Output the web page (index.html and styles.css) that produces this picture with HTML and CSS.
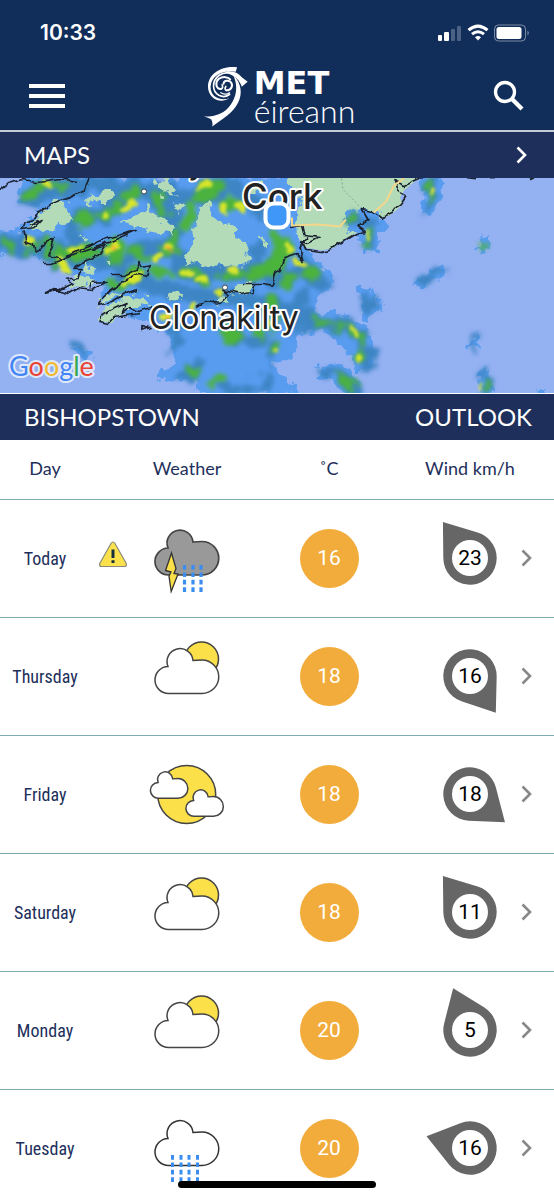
FILE: index.html
```html
<!DOCTYPE html>
<html lang="en">
<head>
  <meta charset="UTF-8" />
  <meta name="viewport" content="width=device-width, initial-scale=1.0"/>
  <title>MET éireann</title>
  <link rel="stylesheet" href="styles.css">
</head>
<body>
  <!-- Shared icons -->
  <svg class="sprite" aria-hidden="true">
    <symbol id="cloud" viewBox="0 0 80 80" overflow="visible">
      <path d="M13 43A13.500 13.500 0 0 1 12 16A13 13 0 1 1 37 10Q41 9.500 46 9.500A16.750 16.750 0 0 1 46 43Z" vector-effect="non-scaling-stroke"/>
    </symbol>
    <symbol id="sun-cloud" viewBox="0 0 80 80">
      <circle cx="54.500" cy="23" r="17" fill="#fbe04a" stroke="#444" stroke-width="1.500"/>
      <use href="#cloud" x="9" y="14.500" width="80" height="80" fill="#fff" stroke="#444" stroke-width="1.500"/>
    </symbol>
    <symbol id="pin" viewBox="-46 -46 92 92">
      <path d="M0-45L21.500-15.800A26.700 26.700 0 1 1-21.500-15.800Z" fill="#666"/>
    </symbol>
    <symbol id="chevron" viewBox="0 0 12 18">
      <path d="M1.500 1.500L9 9L1.500 16.500" fill="none" stroke="currentColor" stroke-width="2.600"/>
    </symbol>
  </svg>

  <header>
    <div class="status">
      <span class="clock">10:33</span>
      <svg width="94" height="18" viewBox="0 0 94 18" fill="#fff">
        <rect x="1" y="11" width="4" height="6" rx="1"/>
        <rect x="7" y="8" width="5" height="9" rx="1"/>
        <rect x="14" y="5" width="4" height="12" rx="1" opacity=".25"/>
        <rect x="20" y="2" width="4" height="15" rx="1" opacity=".25"/>
        <g fill="none" stroke="#fff" stroke-width="3">
          <path d="M31.500 6.200Q41 -2 50.500 6.200"/>
          <path d="M35 10.200Q41 5.200 47 10.200"/>
        </g>
        <path d="M38 13.200Q41 11 44 13.200L41 16.500Z"/>
        <rect x="57.500" y="1" width="31" height="16" rx="4" fill="none" stroke="#fff" stroke-opacity=".45"/>
        <rect x="59.500" y="3" width="25" height="12" rx="2.500"/>
        <path d="M90.500 6.500Q93 9 90.500 11.500Z" opacity=".5"/>
      </svg>
    </div>
    <div class="nav">
      <button class="icon-btn" aria-label="Menu">
        <svg width="36" height="26" viewBox="0 0 36 26" fill="#fff">
          <rect y="1" width="36" height="4"/>
          <rect y="11" width="36" height="4"/>
          <rect y="21" width="36" height="4"/>
        </svg>
      </button>
      <a class="logo" href="#">
        <svg width="45" height="61" viewBox="30 34 136 183" fill="none" stroke="#fff">
          <!-- outer arm -->
          <path d="M133 37L129 51C98 44 56 58 53 95C52 124 78 140 110 131C80 150 45 130 45 95C46 55 88 32 133 37Z" fill="#fff" stroke="none"/>
          <!-- middle arm and flag -->
          <path d="M134 60C115 50 92 51 78 62C56 79 57 110 78 122C90 128 102 126 112 118" stroke-width="5"/>
          <path d="M100 50C120 47 136 53 148 68L165 81L147 96C142 78 126 60 100 55Z" fill="#fff" stroke="none"/>
          <!-- ribbon -->
          <path d="M122 62C147 86 149 118 137 142C123 174 88 194 58 216C60 207 58 201 55 195C49 191 41 188 32 186C67 187 96 176 113 151C132 125 136 94 122 62Z" fill="#fff" stroke="none"/>
          <!-- eye -->
          <path d="M84 103C68 103 66 82 78 72C90 64 106 66 112 74" stroke-width="6" stroke-linecap="round"/>
          <path d="M101 107C116 107 122 92 114 82C106 74 93 78 92 87" stroke-width="6" stroke-linecap="round"/>
          <path d="M84 103C90 102 90 96 88 90M101 107C95 106 96 99 99 95" stroke-width="5" stroke-linecap="round"/>
          <path d="M84 114C94 120 104 119 110 114" stroke-width="4" stroke-linecap="round"/>
        </svg>
        <span class="logo-text">
          <strong>MET</strong>
          <span>éireann</span>
        </span>
      </a>
      <button class="icon-btn" aria-label="Search">
        <svg width="32" height="32" viewBox="0 0 32 32" fill="none" stroke="#fff">
          <circle cx="12" cy="12" r="9.500" stroke-width="3.300"/>
          <path d="M18.500 18.500L29 29" stroke-width="4.300"/>
        </svg>
      </button>
    </div>
  </header>

  <a class="bar" href="#">
    <span>MAPS</span>
    <svg class="bar-arrow" width="12" height="18"><use href="#chevron"/></svg>
  </a>

  <!-- Rainfall radar -->
  <svg class="map" viewBox="0 0 554 216" preserveAspectRatio="xMidYMid slice" role="img" aria-label="Rainfall map">
    <defs>
      <filter id="edge" x="-5%" y="-5%" width="110%" height="110%">
        <feTurbulence type="fractalNoise" baseFrequency=".11" numOctaves="3" seed="4"/>
        <feDisplacementMap in="SourceGraphic" scale="17" xChannelSelector="R" yChannelSelector="G"/>
      </filter>
      <filter id="soft" x="-5%" y="-5%" width="110%" height="110%">
        <feTurbulence type="fractalNoise" baseFrequency=".07" numOctaves="3" seed="9"/>
        <feDisplacementMap in="SourceGraphic" scale="24" xChannelSelector="R" yChannelSelector="G"/>
        <feGaussianBlur stdDeviation="2"/>
      </filter>
      <filter id="core" x="-5%" y="-5%" width="110%" height="110%">
        <feTurbulence type="fractalNoise" baseFrequency=".08" numOctaves="2" seed="9"/>
        <feDisplacementMap in="SourceGraphic" scale="12" xChannelSelector="R" yChannelSelector="G"/>
        <feGaussianBlur stdDeviation="1.400"/>
      </filter>
      <filter id="coast" x="-5%" y="-5%" width="110%" height="110%">
        <feTurbulence type="fractalNoise" baseFrequency=".1" numOctaves="2" seed="2"/>
        <feDisplacementMap in="SourceGraphic" scale="6" xChannelSelector="R" yChannelSelector="G"/>
      </filter>
    </defs>
    <rect width="554" height="216" fill="#94b1f2"/>

    <!-- land to the east -->
    <path d="M280 -4H424L404 13L400 20L403 27L390 38L383 40L374 43L362 53L345 61L334 70L322 73L305 70L296 58L280 52Z" fill="#b3dbb8"/>
    <path d="M341 -3L343 12L355 24L362 32" fill="none" stroke="#8aa694" stroke-dasharray="2 2"/>

    <!-- light rain -->
    <g filter="url(#edge)" fill="#589cf0">
      <path d="M20 0H286L302 22L294 40L296 58L308 76L320 84L330 98L334 108L322 114L314 128L316 135L346 136L360 148L372 160L377 174L368 190L355 193L350 178L338 164L320 152L304 152L294 168L297 180L285 184L272 186L290 204L298 218H200L194 202L168 206L156 194L176 186L170 160L160 150L152 142L132 140L114 134L100 122L104 108L85 100L62 92L48 82L30 77L-8 78V54H18L30 42L46 28L18 25Z"/>
      <path d="M421 0H442L441 20L433 36L420 36L424 20Z"/>
      <path d="M346 36L362 30L380 34L384 46L380 66L372 76L362 72L356 56L346 48Z"/>
      <path d="M316 190L340 186L352 198L362 214L350 218L334 206L318 202Z"/>
      <path d="M359 112L370 108L376 120L384 130L372 138L366 146L360 130Z"/>
      <path d="M413 108L424 98L440 90L444 92L438 102L420 109Z"/>
      <path d="M479 59H488V73H478Z"/>
      <path d="M469 170L474 154L480 170Z"/>
      <path d="M479 216L483 186L494 216Z"/>
      <path d="M536 212L550 214V218H538Z"/>
      <path d="M70 166L92 175L88 184L76 178Z"/>
    </g>

    <!-- steady rain -->
    <g filter="url(#soft)" fill="none" stroke="#3c85c4" stroke-linecap="round" stroke-linejoin="round">
      <path d="M4 66L46 68L60 80L120 84L150 68L170 70L190 95L250 95L280 100" stroke-width="18"/>
      <path d="M28 20L60 8L120 8L190 20L230 8L262 34" stroke-width="17"/>
      <path d="M70 70L74 42L104 36L134 14L168 30L176 60" stroke-width="16"/>
      <path d="M125 96L160 112L220 118L270 128L310 140" stroke-width="16"/>
      <path d="M176 152V172M184 198L206 178M236 160L276 168L268 208L214 212" stroke-width="12" stroke-dasharray="20 14"/>
      <path d="M302 148L340 146L358 156L368 172L364 188" stroke-width="13"/>
      <path d="M256 72L262 88L290 94M300 88L322 106M292 128L304 118" stroke-width="14"/>
      <path d="M434 2L428 30M352 42L372 46L370 66M324 194L344 198L354 212" stroke-width="11"/>
      <path d="M366 116L372 132M420 106L440 94M475 160V168M484 196L486 214M76 170L86 178" stroke-width="8"/>
    </g>

    <!-- heavy rain -->
    <g filter="url(#soft)" fill="none" stroke="#4bb43a" stroke-linecap="round" stroke-linejoin="round">
      <path d="M26 18L46 8L60 8M4 66L10 72M30 70L48 62L60 84L76 70" stroke-width="8"/>
      <path d="M78 46L104 36L124 30L134 12M158 20L166 42" stroke-width="11" stroke-dasharray="14 15"/>
      <path d="M82 72L112 84L116 66L146 78L170 72L184 48L200 16L216 10L232 30L250 26" stroke-width="11" stroke-dasharray="18 16"/>
      <path d="M116 106L140 96L160 94L190 96L212 102L240 96" stroke-width="10" stroke-dasharray="22 15"/>
      <path d="M252 100L276 88L286 72L274 60" stroke-width="15"/>
      <path d="M226 158L254 162L278 144L272 126L290 94L316 96" stroke-width="11" stroke-dasharray="16 17"/>
      <path d="M316 146L334 146L354 152L366 166L362 184" stroke-width="8" stroke-dasharray="10 12"/>
      <path d="M190 192L194 192M212 206L224 204M342 200L354 208M274 174L282 166" stroke-width="8"/>
      <path d="M432 4L430 20M350 41L354 44M370 54L368 66M484 67L485 68M484 208L486 212" stroke-width="6"/>
    </g>

    <!-- downpours -->
    <g filter="url(#core)" fill="none" stroke="#d8e62c" stroke-linecap="round">
      <path d="M44 5L50 8M28 62L30 64M104 39L106 40M124 31L134 26M198 10L208 6" stroke-width="6"/>
      <path d="M68 70L80 72M106 72L118 68M60 84L70 92M126 106L138 98M158 80L160 78M168 72L172 70" stroke-width="7"/>
      <path d="M184 94L190 96M196 101L206 102M230 94L236 92M224 28L225 34M238 28L242 30" stroke-width="6"/>
      <path d="M286 68L290 74M294 84L304 88M192 134L194 128M162 140L168 138M218 116L220 114M272 146H273" stroke-width="6"/>
      <path d="M352 150L357 157M360 180L362 182M367 56L368 60M274 172L276 173M480 208V210M432 12V15" stroke-width="4"/>
      <path d="M169 72L171 74M112 70L113 71M166 140H167" stroke="#f9a832" stroke-width="4"/>
    </g>

    <!-- dry land showing through -->
    <g filter="url(#edge)" fill="#b3dbb8">
      <path d="M209 22L214 38L230 50L240 58L248 72L247 88H202L184 85L192 66L193 42Z"/>
      <path d="M122 43L138 40L148 28L154 38L170 46L173 57L154 55L134 49Z"/>
      <path d="M36 40L52 24L66 26L72 40L62 48L52 53L40 52L28 50Z"/>
      <path d="M84 20L100 18L110 14L116 20L104 25H86Z"/>
      <path d="M151 3L172 -2L174 18L162 17Z"/>
      <path d="M68 108L74 98L86 98L94 106L76 113Z"/>
      <path d="M100 144L106 130L124 120L144 118L150 124L130 134L116 140L106 147Z"/>
      <path d="M96 127L110 116L126 112L112 124Z"/>
      <path d="M166 116L182 114L184 119L170 120Z"/>
      <path d="M232 110L250 103L253 114L238 118Z"/>
      <path d="M217 122L228 118L226 126L218 127Z"/>
      <path d="M260 60L268 64L268 74L264 70ZM174 26L184 26L180 36ZM80 57L90 57L86 63ZM82 86L96 92L88 95ZM246 8L258 4L262 14L250 16ZM106 82L114 84L112 87Z"/>
    </g>

    <!-- coastline -->
    <g filter="url(#coast)" fill="none" stroke="#1b2330" stroke-width="1.700" stroke-linejoin="round">
      <path d="M90 0L84 14L70 20L52 26L40 34L35 42L24 46L22 52L34 50L42 42L30 48M0 12L8 6L22 2L38 4L60 1L76 4"/>
      <path d="M24 54L26 64L32 66L34 74L42 70L46 64L54 60L52 70L48 78L62 82L76 74L92 68L110 60L136 53L112 64L84 74L62 82L52 86L44 86"/>
      <path d="M92 72L106 68L98 78L84 84L74 92L82 92L78 100L64 102L72 106L60 112L46 116L54 112L68 116L78 110L92 112L106 104L92 105L90 110"/>
      <path d="M110 98L124 98L136 92L140 84L142 90L150 88L148 98L138 96L120 106L104 118L98 127L112 124L126 116L138 112"/>
      <path d="M152 130L138 134L130 130L122 136L126 126L112 132L102 138L100 144L108 146L114 140L126 138L140 136M142 148L150 150L142 153Z"/>
      <path d="M196 130L206 124L220 126L228 118L224 112L232 114L240 116L252 114L254 106L244 106M254 106L264 106L272 108L276 96L280 94L284 80L296 76L304 84L300 70L308 60"/>
      <path d="M290 50L302 48L304 58L320 60L308 66L302 64L306 72L322 74L334 70L346 62L356 56L366 54L358 48L368 42L362 32L372 34L382 40L394 34L402 24L406 18L398 14L394 4L404 8L422 0"/>
    </g>
    <path d="M292 40V48L318 47L340 49L346 42M374 35L386 24L394 8L404 1" fill="none" stroke="#f4d78b" stroke-width="2"/>
    <path d="M467 0L476 1M490 0L495 0M530 2L534 0" stroke="#1b2330" stroke-width="2"/>

    <g fill="#fff" stroke="#444">
      <circle cx="144" cy="14" r="2.500"/>
      <circle cx="225" cy="110" r="2.500"/>
    </g>
    <g class="places">
      <text x="242" y="31" class="city">Cork</text>
      <text x="149" y="151" class="town">Clonakilty</text>
      <text x="188" y="-4" class="town">y</text>
    </g>
    <rect x="265.500" y="26" width="23" height="24" rx="8" fill="#3f97f7" stroke="#fff" stroke-width="4"/>
    <text x="9" y="198" class="google"><tspan fill="#4285f4">G</tspan><tspan fill="#ea4335">o</tspan><tspan fill="#f0b92e">o</tspan><tspan fill="#4285f4">g</tspan><tspan fill="#34a853">l</tspan><tspan fill="#ea4335">e</tspan></text>
  </svg>

  <a class="bar" href="#">
    <span>BISHOPSTOWN</span>
    <span>OUTLOOK</span>
  </a>

  <!-- Forecast -->
  <table class="forecast">
    <colgroup>
      <col class="c-day"><col class="c-alert"><col class="c-weather"><col class="c-temp"><col class="c-wind"><col class="c-more">
    </colgroup>
    <thead>
      <tr><th>Day</th><td></td><th>Weather</th><th>˚C</th><th>Wind km/h</th><td></td></tr>
    </thead>
    <tbody>
      <tr>
        <th scope="row">Today</th>
        <td>
          <svg width="30" height="34" viewBox="0 0 30 34">
            <path d="M13 2.500Q15 -.500 17 2.500L28 22Q29.500 25.500 26 25.500H4Q.500 25.500 2 22Z" fill="#fbe24d" stroke="#8a8a7c" stroke-width="1.200"/>
            <path d="M15 8.500V17M15 19.300V22" stroke="#14303c" stroke-width="3"/>
          </svg>
        </td>
        <td>
          <svg width="80" height="80" viewBox="0 0 80 80">
            <use href="#cloud" x="9" y="14" width="80" height="80" fill="#999" stroke="#444" stroke-width="1.700"/>
            <path d="M24.500 35L18.500 52.500L24 54L22 58L24.200 73.500L31 56L27 55.500L29 50.500Z" fill="#fbe04a" stroke="#333" stroke-width="1.300"/>
            <path d="M37.500 47V75M46 47V75M54 47V75" stroke="#3b8df0" stroke-width="3.200" stroke-dasharray="4.700 2.700"/>
          </svg>
        </td>
        <td><span class="temp">16</span></td>
        <td><div class="wind"><svg width="92" height="92"><use href="#pin" transform="rotate(-37 46 46)"/></svg><span>23</span></div></td>
        <td><a class="more" href="#" aria-label="Today"><svg width="12" height="18"><use href="#chevron"/></svg></a></td>
      </tr>
      <tr>
        <th scope="row">Thursday</th>
        <td></td>
        <td><svg width="80" height="80"><use href="#sun-cloud"/></svg></td>
        <td><span class="temp">18</span></td>
        <td><div class="wind"><svg width="92" height="92"><use href="#pin" transform="rotate(145 46 46)"/></svg><span>16</span></div></td>
        <td><a class="more" href="#" aria-label="Thursday"><svg width="12" height="18"><use href="#chevron"/></svg></a></td>
      </tr>
      <tr>
        <th scope="row">Friday</th>
        <td></td>
        <td>
          <svg width="80" height="80" viewBox="0 0 80 80" stroke="#444" stroke-width="1.500">
            <circle cx="39.700" cy="40.500" r="29" fill="#fbe04a"/>
            <use href="#cloud" x="4" y="19" width="47" height="47" fill="#fff"/>
            <use href="#cloud" x="39.500" y="37" width="47" height="47" fill="#fff"/>
          </svg>
        </td>
        <td><span class="temp">18</span></td>
        <td><div class="wind"><svg width="92" height="92"><use href="#pin" transform="rotate(129 46 46)"/></svg><span>18</span></div></td>
        <td><a class="more" href="#" aria-label="Friday"><svg width="12" height="18"><use href="#chevron"/></svg></a></td>
      </tr>
      <tr>
        <th scope="row">Saturday</th>
        <td></td>
        <td><svg width="80" height="80"><use href="#sun-cloud"/></svg></td>
        <td><span class="temp">18</span></td>
        <td><div class="wind"><svg width="92" height="92"><use href="#pin" transform="rotate(-37 46 46)"/></svg><span>11</span></div></td>
        <td><a class="more" href="#" aria-label="Saturday"><svg width="12" height="18"><use href="#chevron"/></svg></a></td>
      </tr>
      <tr>
        <th scope="row">Monday</th>
        <td></td>
        <td><svg width="80" height="80"><use href="#sun-cloud"/></svg></td>
        <td><span class="temp">20</span></td>
        <td><div class="wind"><svg width="92" height="92"><use href="#pin" transform="rotate(-22 46 46)"/></svg><span>5</span></div></td>
        <td><a class="more" href="#" aria-label="Monday"><svg width="12" height="18"><use href="#chevron"/></svg></a></td>
      </tr>
      <tr>
        <th scope="row">Tuesday</th>
        <td></td>
        <td>
          <svg width="80" height="80" viewBox="0 0 80 80">
            <use href="#cloud" x="9" y="14.500" width="80" height="80" fill="#fff" stroke="#333" stroke-width="1.500"/>
            <path d="M25.500 47V75M34 47V75M42 47V75M50.500 47V75" stroke="#3b8df0" stroke-width="3" stroke-dasharray="4.700 2.700"/>
          </svg>
        </td>
        <td><span class="temp">20</span></td>
        <td><div class="wind"><svg width="92" height="92"><use href="#pin" transform="rotate(-75 46 46)"/></svg><span>16</span></div></td>
        <td><a class="more" href="#" aria-label="Tuesday"><svg width="12" height="18"><use href="#chevron"/></svg></a></td>
      </tr>
    </tbody>
  </table>

  <div class="home-indicator"></div>
</body>
</html>
```
FILE: styles.css
```css
:root {
  --header: #112e5b;
  --bar: #1e2f5b;
  --text: #1e2f5b;
  --line: #7faaad;
  --temp: #f2ac3c;
}

* {
  box-sizing: border-box;
}

body {
  margin: 0;
  font-family: Lato, sans-serif;
  background-color: #fff;
  color: var(--text);
  overflow-x: hidden;
}

svg {
  display: block;
}

.sprite {
  position: absolute;
  width: 0;
  height: 0;
}

header {
  background-color: var(--header);
  border-bottom: 2px solid #c3cbd8;
  color: #fff;
}

.status {
  display: flex;
  align-items: center;
  justify-content: space-between;
  padding: 20px 23px 0 40px;
}

.clock {
  font-family: Inter, sans-serif;
  font-size: 21px;
  font-weight: 600;
  line-height: 26px;
}

.nav {
  display: flex;
  align-items: center;
  justify-content: space-between;
  height: 84px;
  padding: 16px 29px 0;
}

.icon-btn {
  padding: 0;
  border: none;
  background: none;
  cursor: pointer;
}

.logo {
  display: flex;
  gap: 6px;
  color: #fff;
  text-decoration: none;
}

.logo-text {
  display: flex;
  flex-direction: column;
  padding-top: 3px;
}

.logo-text strong {
  font-family: "DejaVu Sans", sans-serif;
  font-size: 32px;
  line-height: 28px;
}

.logo-text span {
  font-size: 32px;
  font-weight: 300;
  line-height: 28px;
}

.bar {
  display: flex;
  align-items: center;
  justify-content: space-between;
  height: 46px;
  padding: 0 22px 0 24px;
  background-color: var(--bar);
  color: #fff;
  font-size: 24px;
  line-height: 44px;
  text-decoration: none;
}

.bar-arrow {
  margin-right: 4px;
}

.map {
  width: 100%;
  height: 216px;
  border-bottom: 1px solid #fff;
}

.places {
  font-family: Inter, sans-serif;
  fill: #222;
  stroke: #fff;
  stroke-width: 4px;
  stroke-linejoin: round;
  paint-order: stroke;
}

.city {
  font-size: 35px;
  font-weight: 500;
}

.town {
  font-size: 32px;
}

.google {
  font-family: Lato, sans-serif;
  font-size: 27px;
  stroke: #dfe8fb;
  stroke-width: 4px;
  stroke-linejoin: round;
  paint-order: stroke;
}

.forecast {
  width: 100%;
  table-layout: fixed;
  border-collapse: collapse;
}

.c-day { width: 90px; }
.c-alert { width: 46px; }
.c-weather { width: 102px; }
.c-temp { width: 182px; }
.c-wind { width: 100px; }
.c-more { width: 34px; }

.forecast th,
.forecast td {
  padding: 0;
  border-bottom: 1px solid var(--line);
  font-weight: 400;
  text-align: center;
  vertical-align: middle;
}

.forecast thead th {
  height: 59px;
  padding-bottom: 2px;
  font-size: 18px;
}

.forecast tbody th,
.forecast tbody td {
  height: 118px;
}

.forecast tbody th {
  font-family: "Roboto Condensed", Roboto, sans-serif;
  font-size: 18px;
}

.forecast td svg {
  margin: 0 auto;
}

.temp {
  display: inline-block;
  width: 59px;
  border-radius: 50%;
  background-color: var(--temp);
  color: #fff;
  font-family: Roboto, sans-serif;
  font-size: 21px;
  line-height: 59px;
}

.wind {
  display: grid;
  place-items: center;
}

.wind svg,
.wind span {
  grid-area: 1 / 1;
}

.wind span {
  width: 36px;
  border-radius: 50%;
  background-color: #fff;
  color: #000;
  font-family: Roboto, sans-serif;
  font-size: 21px;
  line-height: 36px;
}

.forecast .more svg {
  margin: 0 0 0 1px;
  color: #888;
}

/* sits over the last row */
.home-indicator {
  position: fixed;
  bottom: 12px;
  left: 50%;
  width: 198px;
  height: 7px;
  border-radius: 4px;
  background-color: #000;
  transform: translateX(-50%);
}
```
